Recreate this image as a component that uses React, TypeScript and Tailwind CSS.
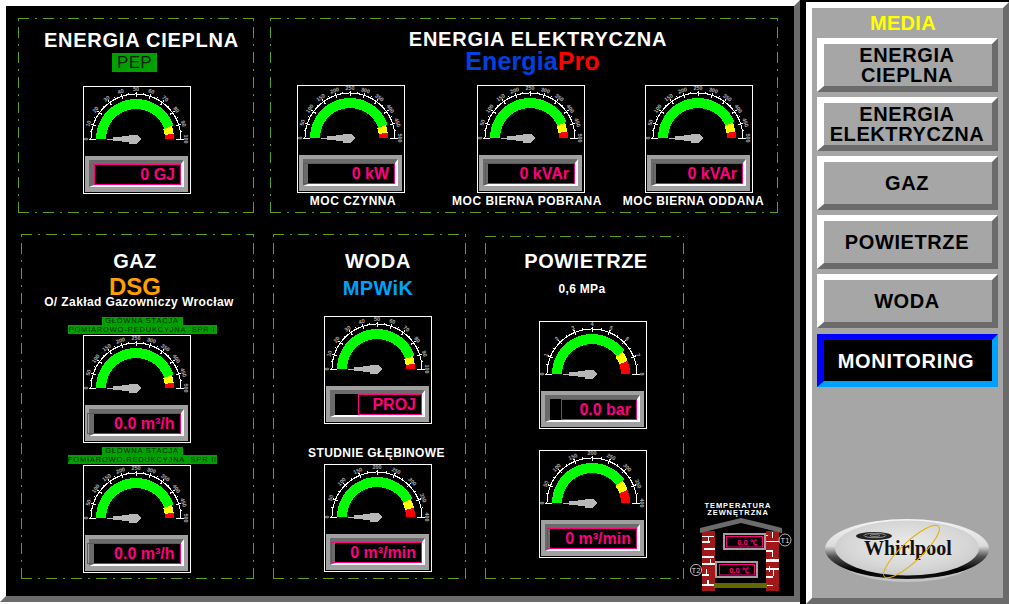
import React from "react";

const DASH =
  "[background:repeating-linear-gradient(90deg,#5aa010_0_11px,transparent_11px_17px,#5aa010_17px_19px,transparent_19px_25px)_top/100%_1px_no-repeat,repeating-linear-gradient(90deg,#5aa010_0_11px,transparent_11px_17px,#5aa010_17px_19px,transparent_19px_25px)_bottom/100%_1px_no-repeat,repeating-linear-gradient(0deg,#5aa010_0_11px,transparent_11px_17px,#5aa010_17px_19px,transparent_19px_25px)_left/1px_100%_no-repeat,repeating-linear-gradient(0deg,#5aa010_0_11px,transparent_11px_17px,#5aa010_17px_19px,transparent_19px_25px)_right/1px_100%_no-repeat]";

const CX = 52;
const CY = 52;
const pt = (r: number, deg: number) => {
  const a = (deg * Math.PI) / 180;
  return [CX + r * Math.cos(a), CY - r * Math.sin(a)];
};
const band = (from: number, to: number, r1 = 30, r2 = 40) => {
  const pts: string[] = [];
  const steps = Math.max(2, Math.ceil(Math.abs(to - from) / 3));
  for (let i = 0; i <= steps; i++) pts.push(pt(r2, from + ((to - from) * i) / steps).join(","));
  for (let i = steps; i >= 0; i--) pts.push(pt(r1, from + ((to - from) * i) / steps).join(","));
  return pts.join(" ");
};

function Dial({ labels, red, yellow }: { labels: string[]; red: number; yellow: number }) {
  const n = labels.length - 1;
  const ticks: React.ReactNode[] = [];
  for (let i = 0; i <= n; i++) {
    const d = 180 - (180 * i) / n;
    const inner = i === 0 || i === n ? 40 : 42;
    const [x1, y1] = pt(inner, d);
    const [x2, y2] = pt(47.5, d);
    ticks.push(<line key={"M" + i} x1={x1} y1={y1} x2={x2} y2={y2} stroke="#fff" strokeWidth="1" />);
    if (i < n) {
      const m = d - 90 / n;
      const [a1, b1] = pt(45, m);
      const [a2, b2] = pt(47, m);
      ticks.push(<line key={"m" + i} x1={a1} y1={b1} x2={a2} y2={b2} stroke="#fff" strokeWidth="1" />);
    }
    const [tx, ty] = pt(49.5, d);
    ticks.push(
      <text
        key={"t" + i}
        x={tx}
        y={ty}
        fontSize="5.5"
        fontWeight="700"
        fill="#b0b0b0"
        textAnchor="middle"
        dominantBaseline="middle"
        transform={`rotate(${90 - d} ${tx} ${ty})`}
      >
        {labels[i]}
      </text>
    );
  }
  const s: string[] = [];
  for (let d = 0; d <= 180; d += 3) s.push(pt(45, d).join(","));
  return (
    <svg width="106" height="68" viewBox="0 0 106 68" className="block" shapeRendering="crispEdges">
      <polygon points={band(180, yellow)} fill="#00ff00" />
      <polygon points={band(yellow, red, 29, 38)} fill="#ffff00" />
      <polygon points={band(red, 0, 29, 38)} fill="#ff0000" />
      <polyline points={s.join(" ")} fill="none" stroke="#fff" strokeWidth="1" />
      {ticks}
      <line x1="23" y1="52" x2="30" y2="52" stroke="#b8b8b8" strokeWidth="1" />
      <polygon points="29,50 38,50 38,49 45,49 45,47.5 53,47.5 58,52 53,56.5 45,56.5 45,55 38,55 38,54 29,54" fill="#b8b8b8" />
    </svg>
  );
}

function Gauge({
  value,
  labels,
  red = 8,
  yellow = 20,
  box = "w-[87px]",
  className = "",
}: {
  value: string;
  labels: string[];
  red?: number;
  yellow?: number;
  box?: string;
  className?: string;
}) {
  return (
    <div className={"w-[108px] h-[108px] shrink-0 border border-white bg-black flex flex-col " + className}>
      <Dial labels={labels} red={red} yellow={yellow} />
      <div className="ml-px mt-px w-[103px] h-[36px] bg-[#a0a0a0] pt-[4px] px-[4px] pb-[5px]">
        <div className="h-full flex justify-end border-t-4 border-l-[5px] border-r-[3px] border-b-2 border-t-[#6b6b6b] border-l-[#6b6b6b] border-r-white border-b-white bg-black">
          <div className={"shrink-0 h-full border border-[#ff0080] flex items-center justify-end pr-[5px] text-[16px] font-bold leading-none text-[#ff0080] whitespace-nowrap " + box}>
            {value}
          </div>
        </div>
      </div>
    </div>
  );
}

function GreenLabel({ a, b }: { a: string; b: string }) {
  return (
    <div className="flex flex-col items-center ml-[9px] text-[#002c00] text-[7.5px] tracking-[0.8px] whitespace-pre">
      <div className="h-[8px] leading-[8px] bg-[#00a000] w-[81px] text-center">{a}</div>
      <div className="h-[9px] leading-[9px] bg-[#00a000] w-[149px] text-center">{b}</div>
    </div>
  );
}

function MenuButton({ children }: { children: React.ReactNode }) {
  return (
    <div className="ml-[5px] w-[181px] h-[54px] mb-[5px] border-6 border-l-7 border-t-white border-l-white border-r-[#6b6b6b] border-b-[#6b6b6b] bg-[#a6a6a6] flex items-center justify-center text-center text-black text-[20px] leading-[20px] font-bold tracking-[0.6px]">
      <div className="mr-[2px]">{children}</div>
    </div>
  );
}

const L100 = ["0", "10", "20", "30", "40", "50", "60", "70", "80", "90", "100"];
const L500 = ["0", "50", "100", "150", "200", "250", "300", "350", "400", "450", "500"];
const L8 = ["0", "1", "2", "3", "4", "5", "6", "7", "8"];
const L400 = ["0", "50", "100", "150", "200", "250", "300", "350", "400"];

function House() {
  const mortar = (x: number, rows: number[][]) =>
    rows.map((r, i) => <rect key={x + "-" + i} x={x + r[0]} y={r[1]} width={r[2]} height={r[3]} fill="#fff" />);
  return (
    <svg width="102" height="95" viewBox="690 498 102 95" className="block">
      <text x="738" y="508" fontSize="7.5" fontWeight="700" fill="#fff" textAnchor="middle" letterSpacing="0.9">TEMPERATURA</text>
      <text x="738" y="515" fontSize="7.5" fontWeight="700" fill="#fff" textAnchor="middle" letterSpacing="0.9">ZEWNĘTRZNA</text>
      <rect x="702" y="531" width="13" height="60" fill="#a01818" />
      <rect x="766" y="531" width="13" height="60" fill="#a01818" />
      {mortar(702, [[0, 536, 12, 1], [6, 536, 1, 5], [0, 541, 8, 2], [2, 548, 11, 2], [0, 556, 12, 2], [8, 559, 1, 6], [0, 563, 13, 2], [4, 569, 1, 6], [0, 574, 7, 2], [0, 584, 13, 2], [5, 580, 2, 5]])}
      {mortar(766, [[0, 535, 2, 1], [6, 532, 1, 6], [0, 541, 13, 1], [0, 550, 7, 2], [6, 552, 1, 5], [0, 559, 13, 3], [3, 566, 1, 6], [0, 568, 13, 2], [0, 576, 7, 2], [7, 570, 1, 6], [0, 585, 7, 1]])}
      <polygon points="700,528 741,518 782,528 782,533 741,523 700,533" fill="#6b6b6b" />
      <rect x="714" y="583" width="53" height="5" fill="#666600" />
      <rect x="723" y="533" width="43" height="17" fill="#a0a0a0" />
      <rect x="725" y="535" width="39" height="13" fill="#000" />
      <rect x="726.5" y="536.5" width="36" height="10.5" fill="#000" stroke="#ff0080" />
      <text x="747" y="545" fontSize="7.5" fontWeight="700" fill="#ff0080" textAnchor="middle">0.0 ℃</text>
      <rect x="715" y="561" width="43" height="17" fill="#a0a0a0" />
      <rect x="717" y="563" width="39" height="13" fill="#000" />
      <rect x="719.5" y="564.5" width="35" height="10.5" fill="#000" stroke="#ff0080" />
      <text x="739" y="573" fontSize="7.5" fontWeight="700" fill="#ff0080" textAnchor="middle">0.0 ℃</text>
      <circle cx="785" cy="540" r="6" fill="#000" stroke="#ddd" strokeWidth="0.8" />
      <text x="785" y="543" fontSize="7.5" fill="#ddd" textAnchor="middle">T1</text>
      <circle cx="696" cy="570" r="5.6" fill="#000" stroke="#ddd" strokeWidth="0.8" />
      <text x="696" y="573" fontSize="7.5" fill="#ddd" textAnchor="middle">T2</text>
    </svg>
  );
}

function Whirlpool() {
  return (
    <svg width="164" height="65" viewBox="0 0 164 65" className="block ml-[13px] mb-[15px] mt-auto">
      <defs>
        <linearGradient id="rim" x1="0" y1="0" x2="0" y2="1">
          <stop offset="0" stopColor="#f4f4f4" />
          <stop offset="0.45" stopColor="#dcdcdc" />
          <stop offset="0.62" stopColor="#555" />
          <stop offset="0.85" stopColor="#000" />
          <stop offset="1" stopColor="#111" />
        </linearGradient>
        <radialGradient id="face" cx="0.5" cy="0.45" r="0.6">
          <stop offset="0" stopColor="#ececec" />
          <stop offset="0.7" stopColor="#d6d6d6" />
          <stop offset="1" stopColor="#c6c6c6" />
        </radialGradient>
      </defs>
      <ellipse cx="82" cy="33" rx="76" ry="31" fill="#c4c4c4" />
      <ellipse cx="82" cy="31" rx="82" ry="30" fill="url(#rim)" />
      <ellipse cx="82" cy="30" rx="72" ry="27.5" fill="url(#face)" />
      <ellipse cx="49" cy="18" rx="18" ry="4" fill="#222" />
      <ellipse cx="50" cy="17.5" rx="11" ry="2.2" fill="none" stroke="#bbb" strokeWidth="0.7" />
      <ellipse cx="50" cy="17.5" rx="5" ry="1" fill="none" stroke="#bbb" strokeWidth="0.6" />
      <text x="39" y="37" fontFamily="'Liberation Serif', serif" fontWeight="700" fontSize="20" fill="#111">Whirlpool</text>
      <ellipse cx="86.5" cy="33.5" rx="37" ry="10" fill="none" stroke="#e0b000" strokeWidth="1" transform="rotate(-43 86.5 33.5)" />
    </svg>
  );
}

export default function App() {
  return (
    <div className="w-[1009px] h-[604px] flex bg-black overflow-hidden font-['Liberation_Sans',sans-serif] text-white">
      <div className="w-[800px] h-[604px] bg-white shrink-0">
        <div className="w-[800px] h-[602px] border-6 border-t-white border-l-white border-r-[#6b6b6b] border-b-[#6b6b6b] bg-black flex flex-col">
          {/* top row */}
          <div className="flex pt-[12px] pl-[12px] gap-[16px]">
            <div className={"w-[236px] h-[195px] flex flex-col items-start pt-[12px] " + DASH}>
              <div className="ml-[26px] text-[20px] leading-[20px] font-bold tracking-[0.75px] whitespace-nowrap">ENERGIA CIEPLNA</div>
              <div className="ml-[94px] mt-[3px] w-[45px] h-[19px] bg-[#00a000] text-[#002000] text-[17px] leading-[19px] text-center tracking-[0.3px]">PEP</div>
              <Gauge className="ml-[65px] mt-[14px]" value="0 GJ" labels={L100} />
            </div>
            <div className={"w-[508px] h-[195px] flex flex-col pt-[11px] " + DASH}>
              <div className="pl-[28px] text-center text-[20px] leading-[20px] font-bold tracking-[0.75px]">ENERGIA ELEKTRYCZNA</div>
              <div className="pl-[17px] text-center text-[25px] leading-[25px] font-bold tracking-[0.1px] text-[#0040e0]">
                Energia<span className="text-[#ff0000]">Pro</span>
              </div>
              <div className="flex ml-[27px] mt-[11px]">
                <div className="w-[108px] flex flex-col items-center">
                  <Gauge value="0 kW" labels={L500} box="w-[92px]" />
                  <div className="ml-[4px] mt-px text-[12px] leading-[14px] font-bold tracking-[0.5px] whitespace-nowrap">MOC CZYNNA</div>
                </div>
                <div className="ml-[72px] w-[108px] flex flex-col items-center">
                  <Gauge value="0 kVAr" labels={L500} box="w-[90px]" red={10} yellow={24} />
                  <div className="mr-[8px] mt-px text-[12px] leading-[14px] font-bold tracking-[0.5px] whitespace-nowrap">MOC BIERNA POBRANA</div>
                </div>
                <div className="ml-[60px] w-[108px] flex flex-col items-center">
                  <Gauge value="0 kVAr" labels={L500} box="w-[90px]" red={10} yellow={24} />
                  <div className="mr-[11px] mt-px text-[12px] leading-[14px] font-bold tracking-[0.5px] whitespace-nowrap">MOC BIERNA ODDANA</div>
                </div>
              </div>
            </div>
          </div>
          {/* bottom row */}
          <div className="flex-1 flex items-start pl-[15px] pt-[21px]">
            <div className={"w-[233px] h-[345px] shrink-0 flex flex-col items-center pt-[17px] " + DASH}>
              <div className="mr-[5px] text-[20px] leading-[20px] font-bold tracking-[0.4px]">GAZ</div>
              <div className="mr-[5px] mt-[7px] text-[24px] leading-[18px] font-bold text-[#ffa000]">DSG</div>
              <div className="ml-[3px] text-[12px] leading-[12px] font-bold tracking-[0.4px] whitespace-nowrap">O/ Zakład Gazowniczy Wrocław</div>
              <div className="mt-[9px]">
                <GreenLabel a="GŁÓWNA STACJA" b="POMIAROWO-REDUKCYJNA  SPR I" />
              </div>
              <Gauge className="mt-px mr-[2px]" value="0.0 m³/h" labels={L500} box="w-[94px]" />
              <div className="mt-[4px]">
                <GreenLabel a="GŁÓWNA STACJA" b="POMIAROWO-REDUKCYJNA  SPR II" />
              </div>
              <Gauge className="mt-px mr-[2px]" value="0.0 m³/h" labels={L500} box="w-[94px]" />
            </div>
            <div className={"ml-[19px] w-[193px] h-[345px] shrink-0 flex flex-col items-center pt-[17px] pl-[17px] " + DASH}>
              <div className="text-[20px] leading-[20px] font-bold tracking-[0.7px]">WODA</div>
              <div className="mt-[7px] text-[20px] leading-[20px] font-bold tracking-[0.4px] text-[#00a0ff]">MPWiK</div>
              <Gauge className="mt-[18px]" value="PROJ" labels={L100} box="w-[64px]" />
              <div className="mr-[3px] mt-[22px] text-[12px] leading-[14px] font-bold tracking-[0.4px] whitespace-nowrap">STUDNIE GŁĘBINOWE</div>
              <Gauge className="mt-[4px]" value="0 m³/min" labels={L400} box="w-[91px]" red={14} yellow={28} />
            </div>
            <div className={"ml-[19px] mt-[2px] w-[199px] h-[343px] shrink-0 flex flex-col items-center pt-[15px] " + DASH}>
              <div className="ml-[3px] text-[20px] leading-[20px] font-bold tracking-[0.5px] whitespace-nowrap">POWIETRZE</div>
              <div className="mr-[5px] mt-[11px] text-[12px] leading-[14px] font-bold tracking-[0.3px]">0,6 MPa</div>
              <Gauge className="ml-[17px] mt-[25px]" value="0.0 bar" labels={L8} box="w-[76px]" red={20} yellow={36} />
              <Gauge className="ml-[17px] mt-[21px]" value="0 m³/min" labels={L400} box="w-[90px]" red={20} yellow={36} />
            </div>
            <div className="self-end ml-[6px] mb-[3px]">
              <House />
            </div>
          </div>
        </div>
      </div>
      <div className="ml-[6px] mt-[2px] w-[203px] h-[602px] shrink-0 border-6 border-t-white border-l-white border-r-[#6b6b6b] border-b-[#6b6b6b] bg-[#a6a6a6] flex flex-col">
        <div className="mt-[5px] mb-[5px] pr-[9px] text-center text-[20px] leading-[20px] font-bold tracking-[0.3px] text-[#ffff00]">MEDIA</div>
        <MenuButton>ENERGIA<br />CIEPLNA</MenuButton>
        <MenuButton>ENERGIA<br />ELEKTRYCZNA</MenuButton>
        <MenuButton>GAZ</MenuButton>
        <MenuButton>POWIETRZE</MenuButton>
        <MenuButton>WODA</MenuButton>
        <div className="ml-[5px] mt-px w-[181px] h-[53px] border-6 border-l-7 border-t-[#0000ff] border-l-[#0000ff] border-r-[#00a0ff] border-b-[#00a0ff] bg-black flex items-center justify-center pr-[4px] text-white text-[20px] font-bold tracking-[0.7px]">
          MONITORING
        </div>
        <Whirlpool />
      </div>
    </div>
  );
}
